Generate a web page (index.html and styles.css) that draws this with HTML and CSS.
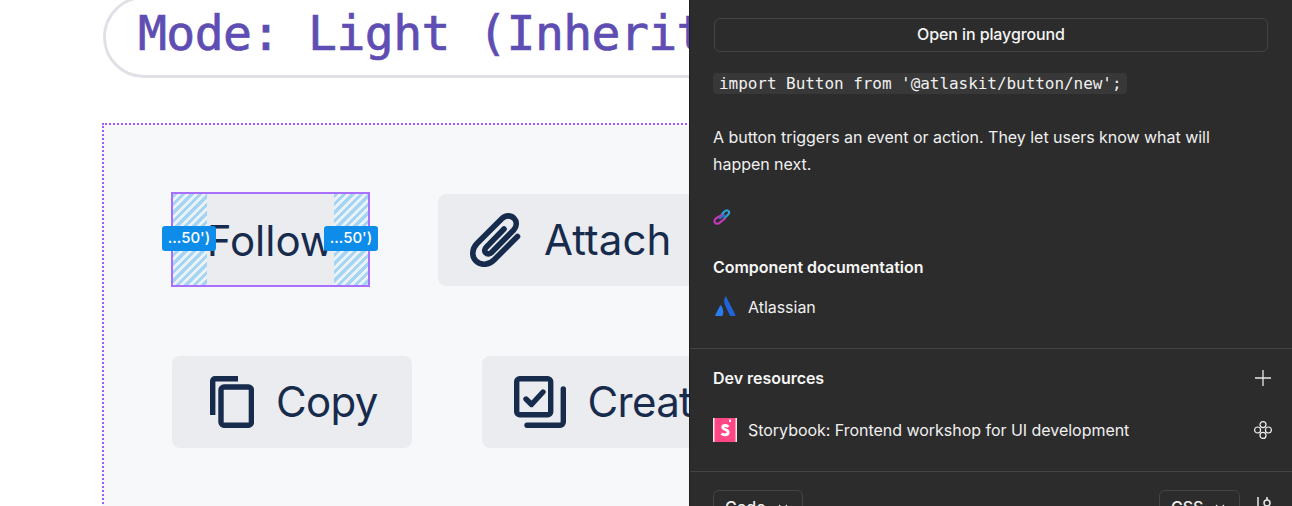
FILE: index.html
```html
<!DOCTYPE html>
<html lang="en">
<head>
<meta charset="utf-8">
<title>Button</title>
<link rel="stylesheet" href="styles.css">
</head>
<body>
<div class="app">
  <main class="canvas">
    <div class="pill">Mode: Light (Inherit)</div>
    <section class="frame">
      <div class="row row-one">
        <div class="btn btn-follow">
          <span class="pad pad-left"></span>
          <span class="label">Follow</span>
          <span class="pad pad-right"></span>
          <span class="badge badge-left">...50')</span>
          <span class="badge badge-right">...50')</span>
        </div>
        <div class="btn btn-attach">
          <svg class="icon icon-attach" viewBox="0 0 52 54" fill="none" stroke="#172b4d" stroke-width="5.6" stroke-linecap="round" stroke-linejoin="round">
            <path d="M47.5 23.5 24 47c-5.5 5.5-13.500 5.500-18 1-4.500-4.500-4.300-12 1-17.500L32 5.500c3.500-3.500 8.800-3.500 12-.3 3.200 3.200 3 8.300-.3 11.800L21.500 39.500c-1.800 1.800-4.300 1.800-5.800.3-1.500-1.500-1.300-3.800.5-5.600L34 16"/>
          </svg>
          <span class="label">Attach</span>
        </div>
      </div>
      <div class="row row-two">
        <div class="btn btn-copy">
          <svg class="icon icon-copy" viewBox="0 0 44 52" fill="none" stroke="#172b4d" stroke-width="5.400">
            <path d="M28 2.700H5a2.300 2.300 0 0 0-2.300 2.300v34"/>
            <rect x="11" y="11" width="30.400" height="38.300" rx="3"/>
          </svg>
          <span class="label">Copy</span>
        </div>
        <div class="btn btn-create">
          <svg class="icon icon-create" viewBox="0 0 52 52" fill="none" stroke="#172b4d" stroke-width="5.400" stroke-linejoin="round">
            <rect x="2.700" y="2.700" width="34" height="36" rx="3"/>
            <path d="M12 23l5.500 5.500L29 16" stroke-linecap="round"/>
            <path d="M49.300 13v33a3.300 3.300 0 0 1-3.300 3.300H13" stroke-linecap="round"/>
          </svg>
          <span class="label">Create</span>
        </div>
      </div>
    </section>
  </main>

  <aside class="panel">
    <div class="section section-top">
      <div class="playground">Open in playground</div>
      <code class="import">import Button from '@atlaskit/button/new';</code>
      <p class="desc">A button triggers an event or action. They let users know what will happen next.</p>
      <svg class="link-icon" viewBox="0 0 18 16" fill="none" stroke-width="2.200" stroke-linecap="round">
        <path d="M9 5l2.500-2.500c1.200-1.200 3-1.300 4-.5s.8 2.500-.3 3.500L11.500 9" stroke="#2f9fd0"/>
        <path d="M9 6L3.500 9C1.800 10 1 12 1.800 13.500s2.700 1.500 4.200.7L11.500 10" stroke="#c238b8"/>
        <path d="M7 9l4-3" stroke="#3a6fc0"/>
      </svg>
      <h3 class="heading">Component documentation</h3>
      <div class="resource">
        <svg class="res-icon" viewBox="-1.500 -1.500 27 27">
          <path fill="#1f64d8" d="M12.300 .5c-1.700 3-1.700 6.500 0 10l5.200 11c.2.400.5.500.9.500h4.600c.7 0 1-.6.700-1.200L13.300 .5c-.3-.5-.8-.5-1 0z"/>
          <path fill="#2b7cf0" d="M7.600 10.300c-.3-.4-.8-.3-1 .1L1 21c-.3.500.1 1 .7 1h6.800c.4 0 .7-.2.900-.6 1.500-3.400.6-8.300-1.800-11.100z"/>
        </svg>
        <span>Atlassian</span>
      </div>
    </div>
    <div class="section section-dev">
      <div class="dev-head">
        <h3 class="heading">Dev resources</h3>
        <svg class="small-icon" viewBox="0 0 18 18" stroke="#e8e8e8" stroke-width="1.300"><path d="M9 1v16M1 9h16"/></svg>
      </div>
      <div class="resource dev-row">
        <svg class="res-icon-square" viewBox="0 0 24 24">
          <rect width="24" height="24" fill="#ececec"/>
          <rect x="1.500" y="0" width="21" height="24" fill="#ff4785"/>
          <path d="M15.500 8.700c-.9-.8-2-1.200-3.300-1.200-1.500 0-2.500.7-2.500 1.800 0 2.700 5.500 1.600 5.500 5 0 1.500-1.300 2.500-3.200 2.500-1.300 0-2.600-.4-3.500-1.300" fill="none" stroke="#fff" stroke-width="2.800"/>
          <rect x="16" y="1.500" width="2" height="2.500" fill="#fff"/>
        </svg>
        <span class="res-text">Storybook: Frontend workshop for UI development</span>
        <svg class="small-icon" viewBox="0 0 18 18" fill="none" stroke="#f0f0f0" stroke-width="1.200">
          <circle cx="9" cy="3.600" r="3"/><circle cx="9" cy="14.400" r="3"/><circle cx="3.600" cy="9" r="3"/><circle cx="14.400" cy="9" r="3"/>
        </svg>
      </div>
    </div>
    <div class="section section-code">
      <div class="select">Code
        <svg class="chev" viewBox="0 0 10 6" fill="none" stroke="#ddd" stroke-width="1.200"><path d="M1 1l4 4 4-4"/></svg>
      </div>
      <div class="code-right">
        <div class="select select-css">CSS
          <svg class="chev" viewBox="0 0 10 6" fill="none" stroke="#ddd" stroke-width="1.200"><path d="M1 1l4 4 4-4"/></svg>
        </div>
        <svg class="tune" viewBox="0 0 18 18" fill="none" stroke="#e8e8e8" stroke-width="1.500"><path d="M4 1v16M13 1v3"/><circle cx="13" cy="7" r="3"/><path d="M13 10v7"/></svg>
      </div>
    </div>
  </aside>
</div>
</body>
</html>
```
FILE: styles.css
```css
* { box-sizing: border-box; }
html, body { margin: 0; height: 100%; overflow: hidden; background: #fff; }
body { font-family: Inter, "Liberation Sans", sans-serif; }
.app { display: flex; width: 1292px; height: 506px; overflow: hidden; }

.canvas { width: 689px; flex: none; overflow: hidden; padding-left: 102px; }
.pill {
  width: 760px; height: 82px; margin-top: -4px; margin-left: 1px;
  padding: 3px 0 0 32px;
  border: 3px solid #dfe1e6; border-radius: 41px;
  font: 400 48px/62px "DejaVu Sans Mono", "Liberation Mono", monospace;
  -webkit-text-stroke: .7px #5e4db2;
  letter-spacing: -.55px;
  color: #5e4db2; white-space: nowrap; overflow: hidden;
}
.frame {
  width: 760px; height: 460px; margin-top: 45px;
  background: #f7f8f9; border: 2px dotted #a259ff; border-right: 0; border-bottom: 0;
  padding: 69px 0 0 68px;
}
.row { display: flex; height: 92px; }
.row-one { gap: 68px; }
.row-two { gap: 70px; margin-top: 70px; }
.btn {
  position: relative; display: flex; align-items: center; flex: none;
  height: 92px; padding: 0 34px 0 32px;
  background: #ebecf0; border-radius: 8px;
  font-size: 42px; color: #172b4d; white-space: nowrap;
}
.label { padding-bottom: 2px; }
.btn-attach { gap: 22px; }
.btn-copy { gap: 22px; padding-left: 38px; }
.btn-create { gap: 22px; }
.row-two .label { letter-spacing: -.7px; }
.btn-follow {
  width: 199px; height: 95px; margin: -2px 0 0 -1px; padding: 0; justify-content: center;
  border: 2px solid #a970ff; border-radius: 0;
}
.btn-follow .label { padding: 1px 0 0; }
.icon { flex: none; }
.icon-attach { width: 52px; height: 54px; }
.icon-copy { width: 44px; height: 52px; }
.icon-create { width: 52px; height: 52px; }
.pad {
  position: absolute; top: 0; bottom: 0; width: 34px;
  background: repeating-linear-gradient(135deg, #a6d5f4 0 3px, #eaf1f7 3px 6px);
}
.pad-left { left: 0; }
.pad-right { right: 0; }
.badge {
  position: absolute; top: 32px; height: 25px; width: 54px;
  background: #0d8ce9; color: #fff; border-radius: 3px;
  font-size: 15px; font-weight: 500; line-height: 24px; text-align: center;
}
.badge-left { left: -11px; }
.badge-right { right: -10px; }

.panel {
  width: 603px; flex: none; height: 506px; overflow: hidden;
  background: #2c2c2c; color: #f0f0f0;
  border-left: 1px solid #1e1e1e;
  font-size: 16px; letter-spacing: -.03px;
}
.section { padding: 0 23px; border-bottom: 1px solid #444; }
.section-top { height: 349px; padding-top: 18px; }
.playground {
  height: 34px; border: 1px solid #444; border-radius: 6px; margin: 0 1px;
  line-height: 31px; text-align: center; font-weight: 500; color: #f5f5f5;
  letter-spacing: -.1px;
}
.import {
  display: inline-block; margin-top: 21px; padding: 0 6px; height: 21px; border-radius: 4px;
  background: #383838; color: #f0f0f0;
  font: 400 16px/21px "DejaVu Sans Mono", "Liberation Mono", monospace;
  letter-spacing: -.05px;
}
.desc { margin: 30px 0 0; line-height: 27px; }
.link-icon { display: block; width: 18px; height: 16px; margin-top: 31px; }
.heading { margin: 0; font-size: 16px; font-weight: 600; color: #f5f5f5; line-height: 24px; }
.section-top .heading { margin-top: 30px; }
.resource { display: flex; align-items: center; gap: 11px; margin-top: 16px; line-height: 24px; }
.res-icon, .res-icon-square { width: 24px; height: 24px; flex: none; }
.section-dev { height: 123px; padding-top: 17px; }
.dev-head { display: flex; justify-content: space-between; align-items: center; }
.small-icon { width: 18px; height: 18px; flex: none; margin-right: -3px; }
.dev-row { margin-top: 28px; }
.res-text { flex: 1; }
.section-code {
  display: flex; justify-content: space-between; align-items: flex-start;
  padding-top: 18px; border-bottom: 0;
}
.select {
  display: flex; align-items: center; gap: 12px; height: 34px; padding: 0 11px;
  border: 1px solid #444; border-radius: 6px; font-weight: 500; width: 90px;
}
.select-css { width: 81px; }
.chev { width: 10px; height: 6px; flex: none; }
.code-right { display: flex; gap: 14px; }
.tune { width: 18px; height: 18px; margin-top: 6px; margin-right: -3px; }
```
